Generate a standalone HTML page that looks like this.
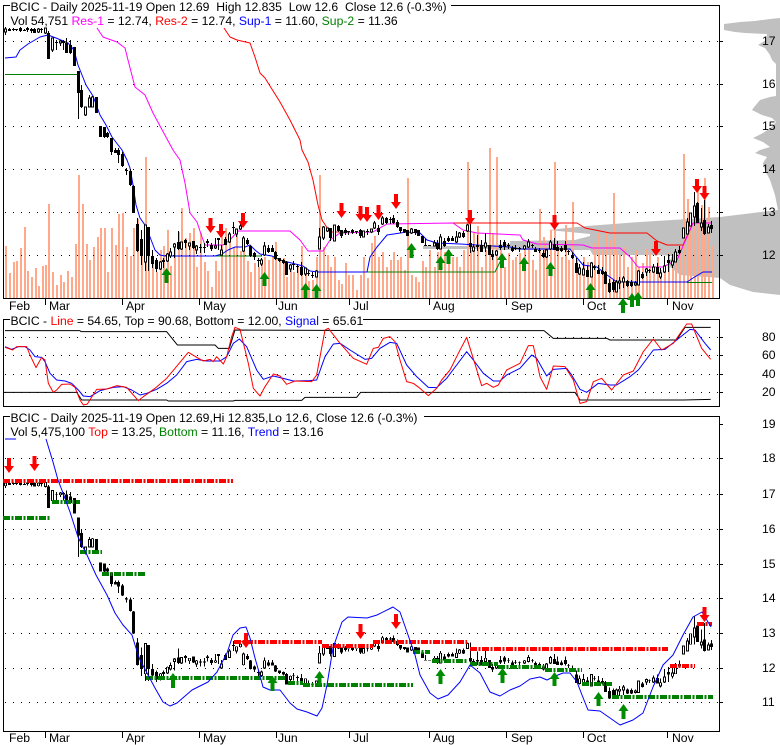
<!DOCTYPE html>
<html><head><meta charset="utf-8"><title>BCIC</title>
<style>
html,body{margin:0;padding:0;background:#fff}
svg{display:block}
text{font-family:"Liberation Sans",Arial,sans-serif;font-size:12.2px;fill:#000;white-space:pre}
</style></head><body>
<svg xmlns="http://www.w3.org/2000/svg" width="780" height="745" viewBox="0 0 780 745">
<defs>
<g id="c" shape-rendering="crispEdges">
<path fill="none" stroke="#000" stroke-width="1" d="M5.5 27V35M9.5 28V31M13.5 28V31M16.5 29V31M20.5 27V32M24.5 29V31M27.5 27V32M31.5 28V33M34.5 28V33M38.5 28V33M41.5 28V33M45.5 28V34M48.5 31V59M52.5 38V52M56.5 40V50M60.5 40V46M63.5 40V50M66.5 38V53M70.5 40V54M74.5 47V66M78.5 71V119M81.5 85V108M85.5 107V116M89.5 95V107M92.5 96V107M96.5 97V113M100.5 126V137M104.5 127V138M107.5 132V138M111.5 138V155M115.5 148V153M118.5 148V163M122.5 152V167M126.5 168V175M130.5 169V186M133.5 185V213M137.5 218V252M141.5 230V265M145.5 225V271M148.5 227V271M152.5 250V268M156.5 258V272M160.5 261V270M163.5 258V268M167.5 253V262M170.5 248V258M174.5 243V258M178.5 231V250M181.5 242V250M185.5 239V248M189.5 243V250M193.5 241V249M196.5 245V254M200.5 244V253M204.5 243V253M207.5 239V247M211.5 243V251M215.5 238V249M218.5 238V250M221.5 245V255M225.5 237V245M229.5 232V243M233.5 222V234M236.5 229V237M240.5 221V230M243.5 236V252M247.5 238V245M250.5 245V257M254.5 252V260M258.5 258V267M261.5 258V266M264.5 242V256M268.5 245V253M272.5 245V252M275.5 251V260M279.5 258V262M283.5 259V264M286.5 261V275M290.5 264V272M293.5 261V270M297.5 264V273M301.5 262V276M305.5 268V276M308.5 270V276M312.5 272V278M316.5 270V277M319.5 228V249M323.5 226V240M327.5 228V232M330.5 228V241M334.5 225V241M338.5 225V232M341.5 230V238M345.5 228V235M348.5 231V235M352.5 229V234M356.5 231V234M360.5 229V238M363.5 231V237M367.5 229V235M371.5 229V233M374.5 221V229M378.5 225V235M382.5 216V225M386.5 217V224M390.5 217V224M393.5 215V224M397.5 220V228M400.5 227V233M404.5 229V233M407.5 230V236M411.5 228V234M415.5 229V235M418.5 230V236M422.5 236V243M425.5 239V245M429.5 245V246M434.5 240V246M437.5 240V250M440.5 234V249M444.5 238V247M448.5 236V242M452.5 236V241M456.5 231V243M459.5 232V238M463.5 231V238M467.5 224V232M470.5 224V253M473.5 244V252M477.5 235V251M481.5 240V252M485.5 233V252M489.5 245V255M492.5 250V260M496.5 250V256M500.5 240V250M504.5 240V250M508.5 243V249M512.5 246V252M515.5 245V250M519.5 247V252M524.5 245V250M528.5 239V248M532.5 244V248M535.5 247V252M539.5 248V253M543.5 250V258M546.5 249V258M550.5 240V250M554.5 238V250M557.5 241V251M561.5 246V252M565.5 241V252M568.5 250V255M572.5 252V259M576.5 258V273M579.5 264V275M583.5 262V275M587.5 266V277M591.5 262V277M594.5 265V270M598.5 265V274M602.5 267V275M605.5 271V284M609.5 279V293M613.5 280V292M616.5 280V292M619.5 277V289M623.5 276V288M627.5 280V287M631.5 280V287M635.5 281V286M638.5 270V285M642.5 272V279M646.5 268V276M649.5 269V273M653.5 264V273M657.5 263V274M660.5 268V279M664.5 256V273M668.5 254V272M672.5 254V268M675.5 249V262M679.5 246V254M683.5 228V238M687.5 218V234M690.5 213V226M694.5 192V226M697.5 202V223M701.5 208V231M704.5 200V235M708.5 224V233M711.5 221V233"/>
<path fill="none" stroke="#000" stroke-width="3" d="M9.5 29V31M13.5 29V30M16.5 29V30M20.5 28V31M24.5 30V31M27.5 28V30M31.5 29V31M34.5 29V33M41.5 29V30M48.5 33V59M56.5 42V43M63.5 41V43M66.5 43V53M70.5 45V53M74.5 47V66M78.5 71V93M81.5 90V107M96.5 97V113M100.5 126V137M104.5 127V137M107.5 133V137M111.5 138V152M115.5 150V153M118.5 150V155M122.5 154V166M126.5 170V171M130.5 171V185M133.5 186V213M137.5 224V251M141.5 239V256M148.5 227V256M152.5 256V264M156.5 260V269M163.5 260V262M178.5 242V249M185.5 240V243M193.5 241V248M200.5 247V248M204.5 247V248M207.5 241V243M211.5 245V249M218.5 238V240M225.5 239V245M233.5 227V228M247.5 240V244M250.5 246V256M254.5 253V257M258.5 260V261M268.5 248V252M272.5 248V252M275.5 252V259M279.5 258V261M283.5 260V263M286.5 262V275M293.5 264V265M297.5 266V267M301.5 267V275M308.5 273V274M312.5 275V276M330.5 228V238M338.5 226V231M341.5 230V236M345.5 230V233M348.5 231V232M352.5 230V233M356.5 231V232M360.5 230V236M367.5 231V232M378.5 228V232M386.5 218V223M390.5 219V220M393.5 218V223M397.5 222V227M400.5 227V231M404.5 229V232M407.5 230V236M415.5 229V233M418.5 230V236M422.5 236V243M425.5 245V246M429.5 245V246M437.5 243V249M444.5 241V246M448.5 238V241M452.5 238V241M463.5 233V237M470.5 243V247M477.5 245V247M481.5 245V252M489.5 245V255M492.5 254V257M500.5 245V248M504.5 242V247M508.5 245V246M512.5 248V251M515.5 248V249M519.5 248V249M532.5 245V246M535.5 249V252M539.5 250V251M543.5 253V257M554.5 244V250M557.5 247V251M561.5 248V251M565.5 245V250M568.5 251V252M572.5 255V258M576.5 263V273M587.5 270V277M594.5 267V268M598.5 270V274M602.5 271V274M605.5 272V284M609.5 283V292M613.5 282V290M627.5 281V286M631.5 282V286M642.5 274V278M649.5 270V271M657.5 267V274M668.5 260V263M679.5 250V253M697.5 203V223M704.5 220V234M711.5 225V229"/>
<path fill="#fff" stroke="#000" stroke-width="1" d="M4.5 29h2V32h-2zM37.5 29h2V32h-2zM44.5 28h2V33h-2zM51.5 38h2V50h-2zM59.5 41h2V43h-2zM84.5 107h2V115h-2zM88.5 98h2V107h-2zM91.5 97h2V107h-2zM144.5 225h2V262h-2zM159.5 262h2V269h-2zM166.5 254h2V261h-2zM169.5 252h2V256h-2zM173.5 244h2V247h-2zM180.5 242h2V249h-2zM188.5 243h2V246h-2zM195.5 246h2V250h-2zM214.5 246h2V248h-2zM220.5 250h2V255h-2zM228.5 234h2V242h-2zM235.5 229h2V234h-2zM239.5 226h2V229h-2zM242.5 238h2V251h-2zM260.5 260h2V264h-2zM263.5 246h2V255h-2zM289.5 265h2V269h-2zM304.5 268h2V274h-2zM315.5 271h2V277h-2zM318.5 237h2V249h-2zM322.5 227h2V238h-2zM326.5 228h2V231h-2zM333.5 225h2V241h-2zM362.5 231h2V237h-2zM370.5 229h2V232h-2zM373.5 223h2V228h-2zM381.5 218h2V224h-2zM410.5 229h2V233h-2zM433.5 243h2V246h-2zM439.5 237h2V249h-2zM455.5 237h2V242h-2zM458.5 233h2V237h-2zM466.5 225h2V231h-2zM472.5 247h2V251h-2zM484.5 243h2V247h-2zM495.5 251h2V255h-2zM523.5 246h2V249h-2zM527.5 242h2V247h-2zM545.5 250h2V257h-2zM549.5 242h2V249h-2zM578.5 268h2V274h-2zM582.5 269h2V275h-2zM590.5 263h2V277h-2zM615.5 282h2V292h-2zM618.5 281h2V283h-2zM622.5 278h2V282h-2zM634.5 283h2V285h-2zM637.5 271h2V285h-2zM645.5 269h2V272h-2zM652.5 267h2V272h-2zM659.5 273h2V277h-2zM663.5 266h2V272h-2zM671.5 261h2V265h-2zM674.5 252h2V262h-2zM682.5 228h2V238h-2zM686.5 222h2V234h-2zM689.5 213h2V226h-2zM693.5 206h2V217h-2zM700.5 223h2V227h-2zM707.5 227h2V233h-2z"/>
</g>
</defs>
<rect width="780" height="745" fill="#fff"/>

<!-- volume profile -->
<path fill="#c0c0c0" d="M780 18L770 19L755 21L740 22L724 24L724 30L735 32L745 33L767 34L766 40L758 45L765 48L770 55L772 60L776 64L776 96L770 97L760 100L755 106L752 110L762 115L772 118L776 122L772 127L763 133L753 138L763 142L770 147L760 150L755 153L767 157L763 163L765 170L770 180L775 195L778 210L720 217L640 222L587 226L548 230L590 234L590 236L575 240L510 241L510 244L490 245L490 246L423 246L423 249L490 249L500 250L590 250L593 255L660 255L672 256L668 265L680 275L720 278L730 285L753 292L780 295Z"/>

<!-- panel 1 volume bars -->
<path fill="none" stroke="#ffa98a" stroke-width="2" shape-rendering="crispEdges" d="M6 246V298M10 273V298M14 262V298M17 261V298M21 248V298M25 227V298M28 271V298M32 277V298M36 268V298M39 286V298M43 266V298M46 265V298M49 204V298M53 272V298M57 285V298M61 275V298M64 282V298M68 271V298M72 277V298M76 244V298M79 175V298M83 204V298M87 244V298M90 260V298M94 247V298M98 237V298M101 228V298M105 228V298M108 272V298M112 228V298M116 245V298M119 214V298M123 213V298M127 247V298M131 256V298M134 228V298M138 219V298M142 251V298M146 157V298M149 245V298M153 256V298M157 272V298M161 250V298M164 246V298M168 230V298M171 266V298M175 247V298M179 232V298M182 208V298M186 238V298M190 233V298M194 228V298M197 267V298M201 233V298M205 262V298M208 271V298M212 287V298M216 261V298M219 271V298M222 233V298M226 228V298M230 238V298M234 247V298M237 232V298M241 251V298M244 243V298M248 261V298M251 272V298M255 263V298M259 267V298M262 260V298M265 257V298M269 260V298M273 257V298M276 242V298M280 260V298M284 258V298M287 277V298M291 265V298M294 272V298M298 267V298M302 246V298M306 268V298M309 281V298M313 280V298M317 257V298M320 175V298M324 247V298M328 255V298M331 267V298M335 257V298M339 280V298M342 284V298M346 263V298M349 275V298M353 275V298M357 290V298M361 275V298M364 257V298M368 278V298M372 243V298M375 236V298M379 257V298M383 252V298M387 267V298M391 260V298M394 252V298M398 260V298M401 257V298M405 270V298M408 178V298M412 275V298M416 277V298M419 282V298M423 261V298M426 267V298M430 250V298M435 267V298M438 252V298M441 243V298M445 252V298M449 250V298M453 257V298M457 257V298M460 267V298M464 250V298M468 162V298M471 250V298M474 233V298M478 226V298M482 267V298M486 250V298M490 148V298M493 233V298M497 157V298M501 250V298M505 267V298M509 253V298M513 260V298M516 257V298M520 253V298M525 250V298M529 240V298M533 260V298M536 270V298M540 209V298M544 237V298M547 247V298M551 230V298M555 162V298M558 247V298M562 257V298M566 225V298M569 260V298M573 202V298M577 260V298M580 273V298M584 257V298M588 262V298M592 263V298M595 243V298M599 233V298M603 250V298M606 232V298M610 240V298M614 193V298M617 250V298M620 255V298M624 247V298M628 267V298M632 257V298M636 250V298M639 267V298M643 263V298M647 249V298M650 253V298M654 267V298M658 257V298M661 270V298M665 267V298M669 253V298M673 257V298M676 263V298M680 247V298M684 154V298M688 199V298M691 225V298M695 213V298M698 190V298M702 205V298M705 178V298M709 207V298M713 246V298"/>

<!-- grid -->
<g fill="none" stroke="#000" stroke-width="1" stroke-dasharray="1 7" shape-rendering="crispEdges">
<path d="M5 41.5H719M5 84.5H719M5 126.5H719M5 169.5H719M5 212.5H719M5 255.5H719"/>
<path d="M5 337.5H719M5 355.5H719M5 374.5H719M5 392.5H719"/>
<path d="M5 458.5H719M5 494.5H719M5 529.5H719M5 564.5H719M5 598.5H719M5 633.5H719M5 668.5H719M5 702.5H719"/>
</g>

<!-- frames -->
<g fill="none" stroke="#000" stroke-width="1" shape-rendering="crispEdges">
<path d="M10 5.5H3.5V298.5H719.5V5.5H451"/>
<path d="M10 319.5H3.5V406.5H719.5V319.5H363"/>
<path d="M10 416.5H3.5V731.5H719.5V416.5H424"/>
<path d="M720 41.5h3M720 84.5h3M720 126.5h3M720 169.5h3M720 212.5h3M720 255.5h3M720 337.5h3M720 355.5h3M720 374.5h3M720 392.5h3M720 424.5h3M720 458.5h3M720 494.5h3M720 529.5h3M720 564.5h3M720 598.5h3M720 633.5h3M720 668.5h3M720 702.5h3"/>
<path d="M45.5 299V305M122.5 299V305M199.5 299V305M276.5 299V305M349.5 299V305M429.5 299V305M506.5 299V305M583.5 299V305M667.5 299V305"/>
<path d="M45.5 732V738M122.5 732V738M199.5 732V738M276.5 732V738M349.5 732V738M429.5 732V738M506.5 732V738M583.5 732V738M667.5 732V738"/>
</g>

<!-- panel 1 lines -->
<g fill="none" stroke-width="1" stroke-linejoin="round">
<path stroke="#008000" d="M5 74.5H78M215 256H262M367 272H495L502 258M687 282.5H712"/>
<path stroke="#ff0000" d="M224 28L230 37L237 40L250 43L255 57L260 73L265 78L280 102L290 120L300 140L302 150L308 162L313 180L318 205L322 220L330 232L345 232M450 223H577L585 228L600 231L610 233H647L657 241L667 245H683L693 223H712"/>
<path stroke="#ff00ff" d="M97 28L103 37L117 42L125 48L128 60L135 87L145 95L153 113L173 150L180 160L185 183L190 213L197 222L202 237L205 245H223L230 240L238 231H290L300 240L308 251H323L330 240L340 233L373 232L387 224L453 223L463 230L477 233L520 235L523 240L537 244L583 245L592 248H620L630 257L638 267H653L663 267L677 260L693 223H712"/>
<path stroke="#0000ff" d="M5 58L16 57L20 50L28 44L40 37L48 35L56 38L68 43L74 50L78 65L82 75L86 85L93 96L100 115L106 125L112 137L122 150L127 160L130 168L133 185L136 205L140 218L145 225L150 237L155 250L160 255L165 256H215L222 254L228 250L235 247H245L250 245L255 250L260 254L272 256L280 260L303 266L310 271L318 272H367L370 257L377 247L387 235L407 232L420 233L427 240L437 243L460 244L510 247L520 249H570L573 253L583 265L597 267L607 275L617 282H687L693 278L703 272H712"/>
</g>

<!-- panel 1 candles -->
<use href="#c"/>
<!-- panel 3 candles -->
<use href="#c" transform="matrix(1 0 0 .8178 0 459.5)"/>

<!-- arrows red -->
<path fill="#ff0000" d="M208.5 218h4v8h3l-5 7l-5 -7h3zM219 224h4v7h3l-5 7l-5 -7h3zM241 213h4v8h3l-5 7l-5 -7h3zM339.5 203h4v8h3l-5 7l-5 -7h3zM358.5 206h4v8h3l-5 7l-5 -7h3zM365 207h4v8h3l-5 7l-5 -7h3zM376.5 205h4v8h3l-5 7l-5 -7h3zM394 194h4v8h3l-5 7l-5 -7h3zM468 210h4v8h3l-5 7l-5 -7h3zM552.5 215h4v8h3l-5 7l-5 -7h3zM654 241h4v8h3l-5 7l-5 -7h3zM695 179h4v7h3l-5 7l-5 -7h3zM702.5 186h4v7h3l-5 7l-5 -7h3z"/>
<!-- arrows green -->
<path fill="#008c00" d="M166.5 268l5 7h-3v8h-4v-8h-3zM264.5 272l5 7h-3v7h-4v-7h-3zM305.5 283l5 7h-3v8h-4v-8h-3zM316.5 284l5 7h-3v7h-4v-7h-3zM411.5 243l5 7h-3v8h-4v-8h-3zM440.5 256l5 7h-3v7h-4v-7h-3zM448.5 249l5 7h-3v8h-4v-8h-3zM502 253l5 7h-3v8h-4v-8h-3zM524 257l5 7h-3v7h-4v-7h-3zM550.5 262l5 7h-3v7h-4v-7h-3zM590.5 283l5 7h-3v8h-4v-8h-3zM623 298l5 7h-3v8h-4v-8h-3zM632 293l5 7h-3v7h-4v-7h-3zM638 292l5 7h-3v7h-4v-7h-3z"/>

<!-- panel 2 lines -->
<g transform="translate(0 300) scale(.33333)" fill="none" stroke-width="3" stroke-linejoin="round">
<path stroke="#000" d="M15 92H240L243 95H500L532 135H645L655 145H688L705 90L1170 92H1632L1660 115H1820L1830 120H2030L2055 82H2132"/>
<path stroke="#000" d="M10 277H230L245 300H500L505 303H700L705 301H905L915 292H1070L1082 277H1725L1740 300H2050L2132 298"/>
<path stroke="#0000ff" d="M15 140L35 148L55 140L75 140L90 150L105 170L125 172L135 185L150 220L170 240L195 243L215 250L235 270L250 288L270 290L300 272L340 262L370 260L395 270L420 285L440 280L470 268L500 250L530 225L560 185L590 178L620 183L660 183L680 170L700 130L718 117L740 140L770 210L790 238L820 228L850 235L880 243L930 242L950 240L975 170L1000 132L1020 130L1050 150L1095 178L1115 175L1140 145L1170 127L1190 130L1220 195L1250 230L1285 262L1310 263L1340 235L1370 195L1400 155L1420 180L1450 220L1480 243L1500 243L1520 225L1560 205L1595 165L1610 175L1640 228L1660 208L1700 205L1715 225L1740 268L1760 277L1795 250L1830 255L1850 255L1890 230L1915 210L1960 150L1995 148L2030 120L2070 88L2085 90L2115 130L2132 150"/>
<path stroke="#ff0000" d="M15 142L38 150L50 140L80 140L90 165L108 203L125 172L135 180L145 250L160 277L170 270L185 253L210 252L225 262L240 300L250 315L262 312L290 268L320 267L350 257L380 262L400 285L415 302L430 290L465 265L500 235L525 205L565 157L590 172L610 183L630 178L640 185L650 170L670 192L680 170L695 110L705 82L720 88L745 190L760 265L780 288L795 260L820 222L840 228L860 253L885 243L935 245L950 225L975 90L985 85L1020 130L1060 175L1100 193L1120 145L1135 142L1150 115L1170 110L1185 125L1200 180L1220 245L1240 250L1260 265L1285 287L1310 265L1325 240L1350 210L1375 160L1400 112L1415 160L1445 257L1460 250L1480 262L1495 255L1520 210L1560 190L1585 137L1600 137L1620 230L1640 268L1660 198L1695 200L1720 240L1740 310L1760 305L1780 245L1805 235L1835 270L1870 225L1900 213L1930 155L1960 117L1985 150L2020 130L2060 72L2075 72L2105 145L2132 178"/>
</g>

<!-- panel 3 overlays -->
<g fill="none" stroke-width="4" stroke-dasharray="7 1.5 2 1.5" shape-rendering="crispEdges">
<path stroke="#ff0000" d="M3 481H233M234 642H322M322 646H373M373 642H467M470 649H668M670 666H695M697 624H712"/>
<path stroke="#008000" d="M3 518H50M52 502H80M80 552H102M102 574H146M146 678H285M288 683H303M303 685H413M413 652H430M432 661H467M470 664H498M498 667H545M545 670H582M582 684H612M612 697H713"/>
</g>
<path fill="none" stroke="#0000ff" stroke-width="1" stroke-linejoin="round" d="M5 439H16M46 439L53 462L58 480L63 493L70 512L78 537L87 555L96 575L107 595L115 613L123 625L132 635L135 645L140 660L147 673L155 688L163 702L170 706L177 703L192 690L208 682L217 672L227 653L233 635L240 628L246 627L250 638L255 658L259 672L263 687L270 690L280 690L290 703L297 709L307 712L317 716L322 708L327 685L333 648L342 622L348 617L367 618L377 615L393 607L400 612L407 632L415 655L420 675L430 693L438 699L448 695L460 682L470 665L480 673L490 692L500 696L510 690L520 686L530 679L540 677L547 680L553 677L563 673L570 673L577 682L582 695L588 710L600 711L610 718L620 725L633 720L643 713L653 687L663 665L673 655L683 635L693 617L702 612L711 627"/>

<!-- red/green arrows panel 3 -->
<path fill="#ff0000" d="M7 458h4v8h3l-5 7l-5 -7h3zM32.5 456h4v8h3l-5 7l-5 -7h3zM244 633h4v8h3l-5 7l-5 -7h3zM358.5 624h4v8h3l-5 7l-5 -7h3zM394 614h4v8h3l-5 7l-5 -7h3zM702.5 607h4v8h3l-5 7l-5 -7h3z"/>
<path fill="#008c00" d="M173 673l5 7h-3v8h-4v-8h-3zM272.5 676l5 7h-3v8h-4v-8h-3zM319.5 671l5 7h-3v7h-4v-7h-3zM440.5 669l5 7h-3v8h-4v-8h-3zM502.5 668l5 7h-3v8h-4v-8h-3zM554.5 672l5 7h-3v7h-4v-7h-3zM598.5 692l5 7h-3v7h-4v-7h-3zM623.5 704l5 7h-3v8h-4v-8h-3z"/>

<!-- titles -->
<text x="10.5" y="11">BCIC - Daily 2025-11-19 Open 12.69  High 12.835  Low 12.6  Close 12.6 (-0.3%)</text>
<text x="10.5" y="25">Vol 54,751 <tspan style="fill:#ff00ff">Res-1</tspan> = 12.74, <tspan style="fill:#ff0000">Res-2</tspan> = 12.74, <tspan style="fill:#0000ff">Sup-1</tspan> = 11.60, <tspan style="fill:#008000">Sup-2</tspan> = 11.36</text>
<text x="10.5" y="325">BCIC - <tspan style="fill:#ff0000">Line</tspan> = 54.65, Top = 90.68, Bottom = 12.00, <tspan style="fill:#0000ff">Signal</tspan> = 65.61</text>
<text x="10.5" y="422">BCIC - Daily 2025-11-19 Open 12.69,Hi 12.835,Lo 12.6, Close 12.6 (-0.3%)</text>
<text x="10.5" y="436">Vol 5,475,100 <tspan style="fill:#ff0000">Top</tspan> = 13.25, <tspan style="fill:#008000">Bottom</tspan> = 11.16, <tspan style="fill:#0000ff">Trend</tspan> = 13.16</text>

<!-- months -->
<text x="9" y="310">Feb</text><text x="49" y="310">Mar</text><text x="126" y="310">Apr</text><text x="203" y="310">May</text><text x="278" y="310">Jun</text><text x="353" y="310">Jul</text><text x="433" y="310">Aug</text><text x="511" y="310">Sep</text><text x="587" y="310">Oct</text><text x="672" y="310">Nov</text>
<text x="9" y="742">Feb</text><text x="49" y="742">Mar</text><text x="126" y="742">Apr</text><text x="203" y="742">May</text><text x="278" y="742">Jun</text><text x="353" y="742">Jul</text><text x="433" y="742">Aug</text><text x="511" y="742">Sep</text><text x="587" y="742">Oct</text><text x="672" y="742">Nov</text>

<!-- right labels -->
<text x="762" y="45">17</text><text x="762" y="88">16</text><text x="762" y="130">15</text><text x="762" y="173">14</text><text x="762" y="216">13</text><text x="762" y="259">12</text>
<text x="762" y="341">80</text><text x="762" y="359">60</text><text x="762" y="378">40</text><text x="762" y="396">20</text>
<text x="762" y="428">19</text><text x="762" y="462">18</text><text x="762" y="498">17</text><text x="762" y="533">16</text><text x="762" y="568">15</text><text x="762" y="602">14</text><text x="762" y="637">13</text><text x="762" y="672">12</text><text x="762" y="706">11</text>
</svg>
</body></html>
